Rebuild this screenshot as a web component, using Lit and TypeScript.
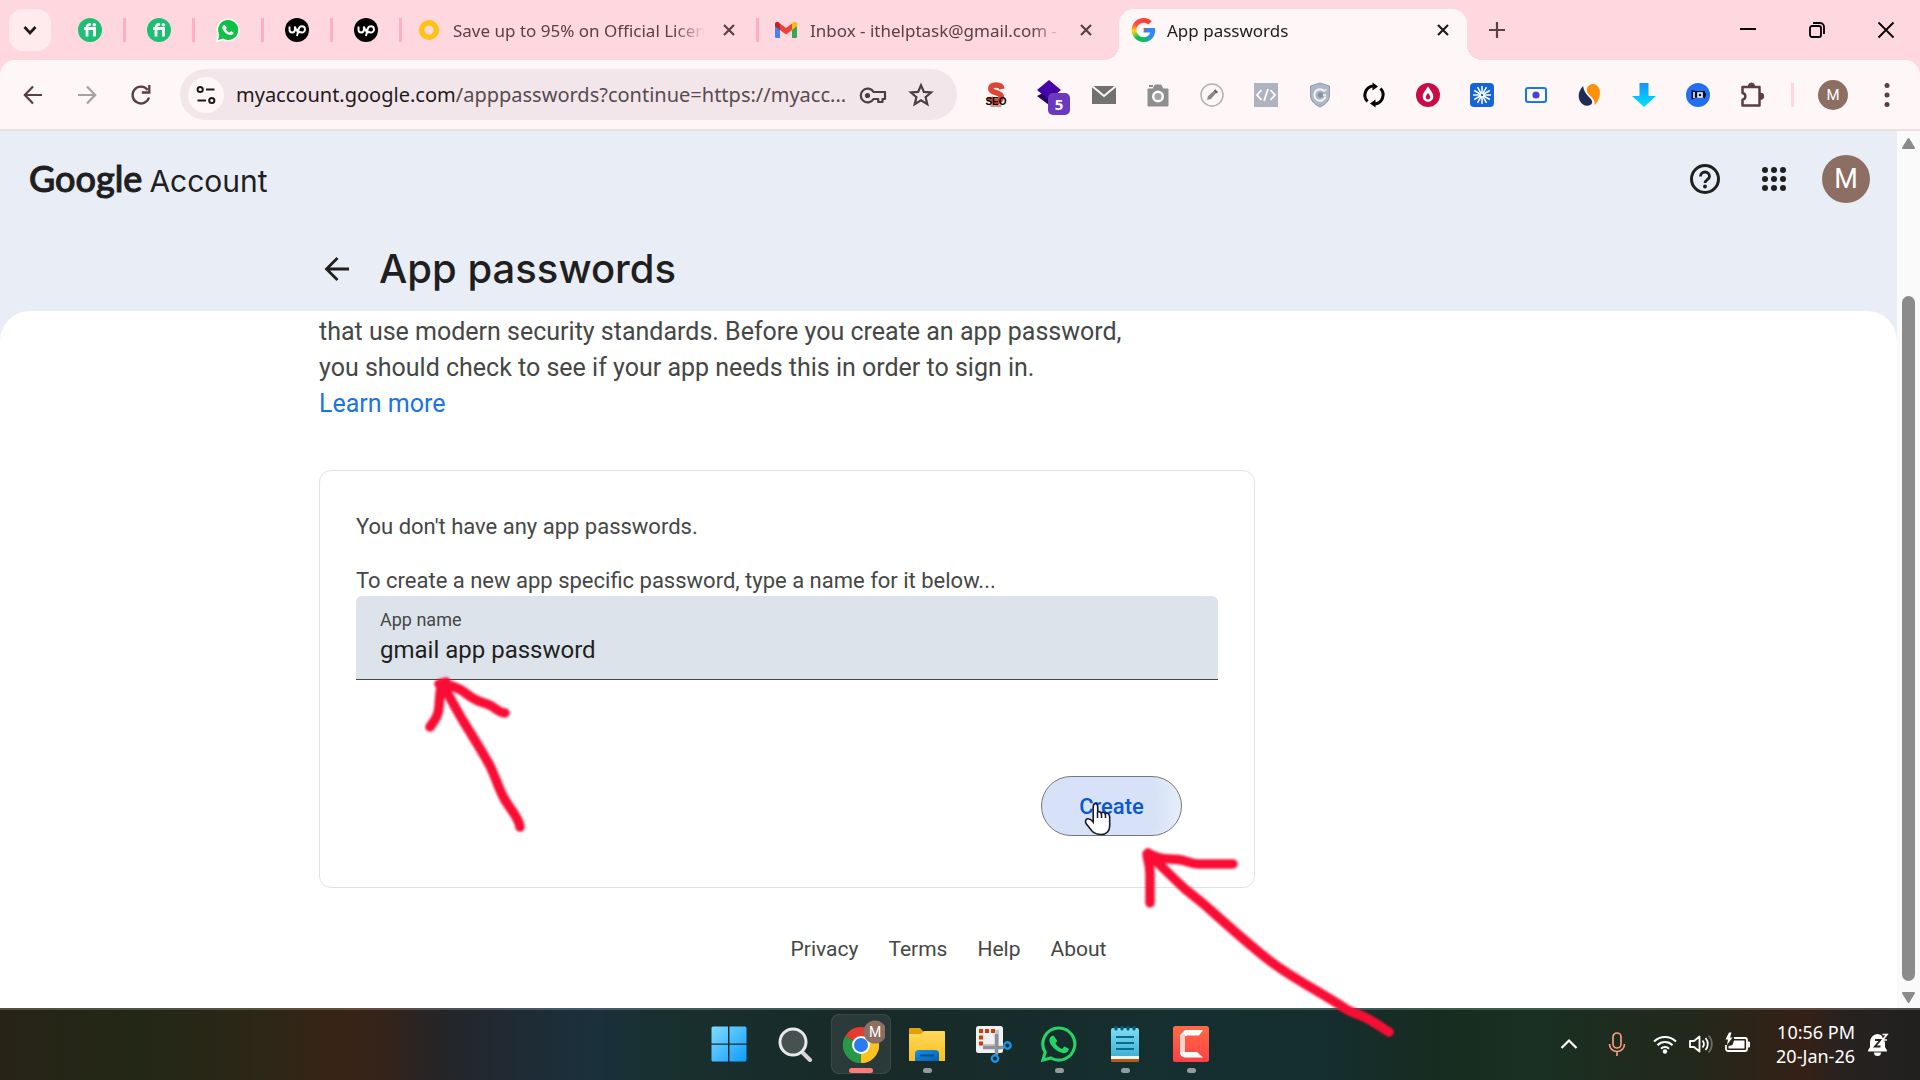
import { LitElement, html, css, svg, type TemplateResult } from "lit";
import { customElement } from "lit/decorators.js";

type Icon = TemplateResult;

const icon = (size: number, box: string, body: unknown): Icon =>
  html`<svg width=${size} height=${size} viewBox=${box} fill="none" aria-hidden="true">${body}</svg>`;

/* ---------- shared glyphs ---------- */

const whatsappPath =
  "M12 2A10 10 0 0 0 3.400 17L2 22l5.200-1.400A10 10 0 1 0 12 2z";
const handsetPath =
  "M8.500 6.800c-.3-.5-.5-.5-.8-.5h-.6c-.3 0-.7.1-1 .5-.4.400-1.200 1.200-1.200 2.800s1.200 3.200 1.400 3.400c.2.200 2.400 3.700 5.900 5 2.900 1.100 3.500.9 4.100.8.700-.1 2-.8 2.300-1.600.300-.8.300-1.500.200-1.600-.1-.2-.3-.2-.6-.4l-2.100-1c-.3-.1-.5-.2-.8.2l-.9 1.200c-.2.200-.4.200-.7.100-.3-.2-1.300-.5-2.500-1.600-.9-.8-1.500-1.800-1.700-2.100-.2-.3 0-.5.100-.6l.8-1c.1-.2.100-.4 0-.6z";

const chevronDown = icon(24, "0 0 24 24", svg`<path d="m6.500 9 5.500 6 5.500-6" stroke="#1f1a1b" stroke-width="2.800"/>`);
const closeIcon = icon(18, "0 0 18 18", svg`<path d="m4 4 10 10M14 4 4 14" stroke="currentColor" stroke-width="2.200"/>`);
const plusIcon = icon(20, "0 0 20 20", svg`<path d="M10 2v16M2 10h16" stroke="#5a4047" stroke-width="2.200"/>`);

const fiverrIcon = icon(24, "0 0 24 24", svg`
  <circle cx="12" cy="12" r="12" fill="#1dbf73"/>
  <path d="M6 10.500h10.500v8M9 18.500V9.500c0-2.300 1.300-3.300 3.800-3.200" stroke="#fff" stroke-width="2.800"/>
  <circle cx="16.300" cy="6.700" r="1.800" fill="#fff"/>`);

const whatsappTabIcon = icon(26, "0 0 26 26", svg`
  <path transform="translate(1 1)" d=${whatsappPath} fill="#fff" stroke="#fff" stroke-width="3"/>
  <path transform="translate(1 1)" d=${whatsappPath} fill="#0fc144"/>
  <path transform="translate(3.400 3) scale(.8)" d=${handsetPath} fill="#fff"/>`);

const upworkIcon = icon(24, "0 0 24 24", svg`
  <circle cx="12" cy="12" r="12" fill="#000"/>
  <path d="M4.500 8.500v3.300a2.700 2.700 0 0 0 5.400 0V8.500c1 3 2.600 5.800 4.600 6.200M12 18l1.500-6.500c.5-2.200 1.800-3.200 3.400-3.200a3 3 0 1 1 0 6.200c-1.800 0-3.600-1.300-5-3.500" stroke="#fff" stroke-width="1.900"/>`);

const ringIcon = icon(24, "0 0 24 24", svg`<circle cx="12" cy="12" r="7.300" stroke="#ffc20e" stroke-width="5.400"/>`);

const gmailIcon = icon(24, "0 0 24 24", svg`
  <path d="M1 6.500V18.500a1.500 1.500 0 0 0 1.500 1.500H6V10z" fill="#4285f4"/>
  <path d="M18 10v10h3.500a1.500 1.500 0 0 0 1.500-1.500V6.500z" fill="#34a853"/>
  <path d="M18 5.500V12l5-3.800V6c0-2-2.200-3-3.800-1.800z" fill="#fbbc04"/>
  <path d="M6 12V5.500l6 4.500 6-4.500V12l-6 4.500z" fill="#ea4335"/>
  <path d="M1 6v2.200L6 12V5.500L4.800 4.200C3.200 3 1 4 1 6z" fill="#c5221f"/>`);

/* ---------- toolbar glyphs ---------- */

const arrowLeft = icon(24, "0 0 24 24", svg`<path d="M21 12H4.500M12 3.500 3.800 12l8.200 8.500" stroke="#5b3d45" stroke-width="2.200"/>`);
const arrowRight = icon(24, "0 0 24 24", svg`<path d="M3 12h16.500M12 3.500l8.200 8.500-8.200 8.500" stroke="#a99fa1" stroke-width="2.200"/>`);
const reloadIcon = icon(24, "0 0 24 24", svg`
  <path d="M20 14.500A8.400 8.400 0 1 1 18.700 7" stroke="#5b3d45" stroke-width="2.300"/>
  <path d="M20.300 2v7.500h-7.500" stroke="#5b3d45" stroke-width="2.300"/>`);
const tuneIcon = icon(22, "0 0 22 22", svg`
  <circle cx="5.200" cy="5.500" r="2.600" stroke="#1f1a1b" stroke-width="2"/>
  <circle cx="16.800" cy="16.500" r="2.600" stroke="#1f1a1b" stroke-width="2"/>
  <path d="M11 5.500h8.500M2.500 16.500H11" stroke="#1f1a1b" stroke-width="2.200"/>`);
const keyIcon = icon(28, "0 0 28 28", svg`
  <path d="M14.600 11H26v7h-2.500v3h-4.300v-3h-4.600a6.900 6.900 0 1 1 0-7z" stroke="#4a3f42" stroke-width="2.200" stroke-linejoin="round"/>
  <circle cx="8.500" cy="14.500" r="2.600" fill="#4a3f42"/>`);
const starIcon = icon(26, "0 0 26 26", svg`<path d="m13 3.300 2.900 6.600 7.200.6-5.500 4.700 1.700 7-6.300-3.800-6.300 3.800 1.700-7-5.500-4.700 7.200-.6z" stroke="#4a3f42" stroke-width="2.200"/>`);

const extensions: { name: string; art: Icon }[] = [
  { name: "SEO", art: icon(30, "0 0 30 30", svg`
      <path d="M21 9C20.500 6 18.500 5 15.200 5c-3.600 0-5.400 1.400-5.400 3.700 0 5 10.600 3 10.600 8.300 0 2.700-2.200 4.500-5.400 4.500-3.400 0-5.300-1.200-5.900-4.500" stroke="#dc4534" stroke-width="5.500"/>
      <path d="M9.500 24.500h11v2.500h-11z" fill="#e0907f"/>
      <text x="15" y="25" text-anchor="middle" font-family="Liberation Sans, sans-serif" font-weight="700" font-size="10" fill="#000">SEO</text>`) },
  { name: "Layers", art: icon(40, "0 0 40 40", svg`
      <path d="m7 21 12-6 12 6-12 9z" fill="#24006b"/>
      <path d="m7 15 12-10 12 10-12 10z" fill="#4502a8"/>
      <rect x="18" y="18" width="22" height="22" rx="5" fill="#6b38c0"/>
      <text x="29" y="35" text-anchor="middle" font-family="Noto Sans, sans-serif" font-weight="700" font-size="15" fill="#fff">5</text>`) },
  { name: "Mail", art: icon(26, "0 0 26 26", svg`
      <path d="M1 4h24v18H1z" fill="#717171"/><path d="m1 4 12 10L25 4" stroke="#fff8f8" stroke-width="2"/>`) },
  { name: "Camera", art: icon(26, "0 0 26 26", svg`
      <path d="M3 7h5l2-4h6l2 4h5v17H3z" fill="#8e8e8e" stroke="#8e8e8e" stroke-linejoin="round"/>
      <circle cx="13" cy="14.500" r="4.800" fill="#a4a4a4" stroke="#fff" stroke-width="2.400"/>
      <path d="M4 4h4" stroke="#8e8e8e" stroke-width="2"/>`) },
  { name: "Pen", art: icon(26, "0 0 26 26", svg`
      <circle cx="13" cy="13" r="11" stroke="#b3b3b3" stroke-width="1.500"/>
      <path d="m8 18 1-4 7-6 2 2-6 7z" fill="#8a8a8a"/><path d="m15.500 8 2.800 2.800" stroke="#666" stroke-width="2"/>`) },
  { name: "Code", art: icon(26, "0 0 26 26", svg`
      <path d="M1 1h24v24H1z" fill="#aeb3bf"/>
      <path d="m8.500 8-4.500 5 4.500 5M17.500 8l4.500 5-4.500 5M15 7l-4 12" stroke="#fff" stroke-width="1.800"/>`) },
  { name: "Shield", art: icon(26, "0 0 26 26", svg`
      <path d="m13 1 9.500 3v9c0 6-4 9.500-9.500 12-5.500-2.500-9.500-6-9.500-12V4z" fill="#adb7c6" stroke="#909bad"/>
      <path d="M17.500 9.500a5.700 5.700 0 1 0 1 5" stroke="#f3f6fa" stroke-width="2"/>
      <circle cx="13.500" cy="13" r="2.800" fill="#8492aa"/><path d="M16 13h3M17.500 8h2" stroke="#f3f6fa" stroke-width="1.600"/>`) },
  { name: "Sync", art: icon(26, "0 0 26 26", svg`
      <path d="M12 4A9.200 9.200 0 0 0 6.500 19.500M14 22A9.200 9.200 0 0 0 19.500 6.500" stroke="#000" stroke-width="3"/>
      <path d="M11.500.5 17 4.500l-5.500 4zM14.500 25.500 9 21.500l5.500-4z" fill="#000"/>`) },
  { name: "Drop", art: icon(26, "0 0 26 26", svg`
      <circle cx="13" cy="13" r="12" fill="#c80d46"/>
      <path d="M13 4.500c3 4.300 5.300 7 5.300 10a5.300 5.300 0 0 1-10.600 0c0-3 2.300-5.700 5.300-10z" fill="#fff"/>
      <path d="M13 11c1.500 2 2.200 3 2.200 4.200a2.200 2.200 0 0 1-4.400 0c0-1.200.7-2.200 2.200-4.200z" fill="#c80d46"/>`) },
  { name: "Burst", art: icon(26, "0 0 26 26", svg`
      <rect x="1" y="1" width="24" height="24" rx="4" fill="#1565d8"/>
      ${[0, 30, 60, 90, 120, 150].map(
        (a) => svg`<path transform="rotate(${a} 13 13)" d="M13 4v18" stroke="#fff" stroke-width="1.500"/>`
      )}<circle cx="13" cy="13" r="2.500" fill="#fff"/><circle cx="13" cy="13" r="1.200" fill="#1565d8"/>`) },
  { name: "Recorder", art: icon(26, "0 0 26 26", svg`
      <rect x="3" y="6" width="20" height="14" rx="2" fill="#fff" stroke="#1477f8" stroke-width="2"/>
      <circle cx="13" cy="13" r="3.600" fill="#4a3fd6"/>`) },
  { name: "Similar", art: icon(26, "0 0 26 26", svg`
      <path d="M6 4C1 9-.5 18 6 22.500c3 2 8 1.500 9-1.500 1.500-5-7-6-9-17z" fill="#212c56"/>
      <path d="M12 3.500c4-3 9-1 10.500 4C24 14 21 20 17.500 23c1.500-7-6.500-9.500-7.500-13.500-.6-2.500 0-4.500 2-6z" fill="#fb9109"/>`) },
  { name: "Download", art: icon(26, "0 0 26 26", svg`
      <defs><linearGradient id="dl" x1="0" y1="0" x2="0" y2="1"><stop stop-color="#1590ff"/><stop offset="1" stop-color="#00e4fb"/></linearGradient></defs>
      <path d="M8.500 1h9v13H25L13 25 1 14h7.500z" fill="url(#dl)"/>`) },
  { name: "IQ", art: icon(26, "0 0 26 26", svg`
      <circle cx="13" cy="13" r="12" fill="#2170f3"/>
      <path d="M6.500 8v10l4-2.500h8l1.500 1.500v-2.500h1v-3.500h-1V9h-9z" fill="#06132e"/>
      <path d="M9 10v6M13 11h4v4h-4z" stroke="#fff" stroke-width="1.500"/>`) },
  { name: "Extensions", art: icon(28, "0 0 28 28", svg`
      <path d="M4.500 6h17v18.500h-17v-5.800c3.800-.5 3.800-6.200 0-6.700z" stroke="#5b3d45" stroke-width="2.500" stroke-linejoin="round"/>
      <path d="M10.500 5a3 3 0 0 1 6 0zM22.500 12a3 3 0 0 1 0 6.500z" fill="#5b3d45" stroke="#5b3d45"/>`) },
];

/* ---------- tab strip ---------- */

@customElement("tab-strip")
class TabStrip extends LitElement {
  static styles = css`
    :host { display: block; background: #ffd7df; font-family: "Noto Sans", "Open Sans", sans-serif; }
    .strip { display: flex; align-items: flex-end; height: 60px; padding-left: 9px; }
    button { border: 0; padding: 0; background: none; display: grid; place-items: center; color: inherit; }
    .search { width: 42px; height: 42px; margin: 0 6px 9px 0; border-radius: 14px; background: #ffebee; }
    .tab { display: flex; align-items: center; gap: 12px; height: 42px; margin-bottom: 9px; box-sizing: border-box; color: #5a4047; }
    .tab svg { flex: none; }
    .split::after { content: ""; flex: none; width: 3px; height: 24px; background: #ffafbf; }
    .pinned { width: 69px; gap: 0; }
    .pinned .fav { flex: 1; display: grid; place-items: center; }
    .wide { width: 360px; padding: 0 21px 0 15px; }
    .wide.split { width: 357px; padding-right: 0; }
    .wide.split .x { margin-right: 3px; }
    .title { flex: 1; min-width: 0; overflow: hidden; white-space: nowrap; padding-top: 2px; font-size: 17px; line-height: 26px;
      mask-image: linear-gradient(90deg, #000 88%, transparent); }
    .x { width: 24px; height: 24px; flex: none; }
    .active { position: relative; width: 348px; height: 51px; margin: 0; padding: 0 12px 9px; border-radius: 15px 15px 0 0;
      background: #fff7f7; color: #1f1a1b; }
    .active::before, .active::after { content: ""; position: absolute; bottom: 0; width: 15px; height: 15px; }
    .active::before { right: 100%; background: radial-gradient(circle at 0 0, transparent 15px, #fff7f7 15px); }
    .active::after { left: 100%; background: radial-gradient(circle at 100% 0, transparent 15px, #fff7f7 15px); }
    .g { flex: none; width: 24px; height: 24px; transform: scale(1.2);
      clip-path: path("M12.545,10.239v3.821h5.445c-0.712,2.315-2.647,3.972-5.445,3.972c-3.332,0-6.033-2.701-6.033-6.032s2.701-6.032,6.033-6.032c1.498,0,2.866,0.549,3.921,1.453l2.814-2.814C17.503,2.988,15.139,2,12.545,2C7.021,2,2.543,6.477,2.543,12s4.478,10,10.002,10c8.396,0,10.249-7.85,9.426-11.748L12.545,10.239z");
      background: conic-gradient(#f4402f 0deg 60deg, #3186ff 75deg 130deg, #0ebc5f 170deg 215deg, #ffd314 265deg, #ff4641 310deg); }
    .new { width: 24px; height: 24px; margin: 0 0 18px 18px; }
    .controls { display: flex; margin-left: auto; }
    .controls button { width: 69px; height: 60px; }
  `;
  render() {
    const pinned = [
      ["Fiverr", fiverrIcon], ["Fiverr", fiverrIcon], ["WhatsApp", whatsappTabIcon],
      ["Upwork", upworkIcon], ["Upwork", upworkIcon],
    ] as [string, Icon][];
    return html`<div class="strip">
      <button class="search" aria-label="Search tabs">${chevronDown}</button>
      ${pinned.map(([name, art]) => html`<div class="tab pinned split"><button class="fav" aria-label=${name}>${art}</button></div>`)}
      <div class="tab wide split">${ringIcon}<span class="title">Save up to 95% on Official Licen</span><button class="x" aria-label="Close tab">${closeIcon}</button></div>
      <div class="tab wide">${gmailIcon}<span class="title">Inbox - ithelptask@gmail.com -</span><button class="x" aria-label="Close tab">${closeIcon}</button></div>
      <div class="tab active"><span class="g"></span><span class="title">App passwords</span><button class="x" aria-label="Close tab">${closeIcon}</button></div>
      <button class="new" aria-label="New tab">${plusIcon}</button>
      <div class="controls">
        <button aria-label="Minimize">${icon(16, "0 0 16 16", svg`<path d="M0 7h16" stroke="#000" stroke-width="2"/>`)}</button>
        <button aria-label="Restore">${icon(18, "0 0 18 18", svg`<rect x="2" y="5" width="11" height="11" rx="2" stroke="#000" stroke-width="1.800"/><path d="M5 2h7a4 4 0 0 1 4 4v7" stroke="#000" stroke-width="1.800"/>`)}</button>
        <button aria-label="Close">${icon(18, "0 0 18 18", svg`<path d="m1.500 1.500 15 15M16.500 1.500l-15 15" stroke="#000" stroke-width="1.800"/>`)}</button>
      </div>
    </div>`;
  }
}

/* ---------- toolbar ---------- */

@customElement("tool-bar")
class ToolBar extends LitElement {
  static styles = css`
    :host { display: block; background: #ffd7df; font-family: "Noto Sans", "Open Sans", sans-serif; }
    .bar { display: flex; align-items: center; height: 69px; padding: 0 6px; border-bottom: 2px solid #ebdfdf;
      border-radius: 15px 15px 0 0; background: #fff7f7; }
    button { border: 0; padding: 0; background: none; display: grid; place-items: center; }
    .cell { flex: none; width: 54px; height: 54px; }
    .omni { flex: 1; min-width: 0; display: flex; align-items: center; height: 51px; margin: 0 12px; padding: 0 12px 0 8px;
      box-sizing: border-box; border-radius: 26px; background: #f3e6ea; }
    .site { flex: none; width: 36px; height: 36px; border-radius: 50%; background: #fff7f7; }
    .url { flex: 1; min-width: 0; margin-left: 12px; overflow: hidden; white-space: nowrap; font-size: 20px; line-height: 30px; color: #574b4f; }
    .host { color: #1f1a1b; }
    .mark { flex: none; width: 48px; height: 48px; }
    .mark.key { width: 44px; margin-right: 2px; }
    .sep { flex: none; width: 3px; height: 24px; margin: 0 12px; background: #ffd7df; }
    .avatar { display: grid; place-items: center; width: 30px; height: 30px; border-radius: 50%; background: #8d6e63; color: #fff;
      font: 15px/30px Roboto, sans-serif; }
  `;
  render() {
    return html`<div class="bar">
      <button class="cell" aria-label="Back">${arrowLeft}</button>
      <button class="cell" aria-label="Forward">${arrowRight}</button>
      <button class="cell" aria-label="Reload">${reloadIcon}</button>
      <div class="omni">
        <button class="site" aria-label="Site information">${tuneIcon}</button>
        <span class="url"><span class="host">myaccount.google.com</span>/apppasswords?continue=https://myacc...</span>
        <button class="mark key" aria-label="Passwords">${keyIcon}</button>
        <button class="mark" aria-label="Bookmark">${starIcon}</button>
      </div>
      ${extensions.map((e) => html`<button class="cell" aria-label=${e.name}>${e.art}</button>`)}
      <span class="sep"></span>
      <button class="cell" aria-label="Profile"><span class="avatar">M</span></button>
      <button class="cell" aria-label="Menu">${icon(26, "0 0 26 26", svg`<g fill="#5b3d45"><circle cx="13" cy="3.500" r="2.500"/><circle cx="13" cy="13" r="2.500"/><circle cx="13" cy="22.500" r="2.500"/></g>`)}</button>
    </div>`;
  }
}

/* ---------- account page ---------- */

@customElement("account-page")
class AccountPage extends LitElement {
  static styles = css`
    :host { display: grid; grid-template-columns: 1fr 23px; background: #fafafa; color: #444746;
      font-family: Roboto, "Liberation Sans", sans-serif; }
    button { border: 0; padding: 0; background: none; display: grid; place-items: center; font-family: inherit; }
    a { color: inherit; text-decoration: none; }
    .page { display: flex; flex-direction: column; background: #e9edf6; }
    .top { display: flex; align-items: center; height: 96px; padding: 0 27px 0 29px; box-sizing: border-box; color: #1f1f1f; }
    .brand { display: flex; align-items: baseline; gap: 7px; font: 30px/40px Inter, sans-serif; }
    .brand b { font-weight: 500; font-family: Lato, sans-serif; font-size: 36px; -webkit-text-stroke: 1px #1f1f1f; }
    .tools { display: flex; align-items: center; margin-left: auto; }
    .tool { width: 69px; height: 48px; }
    .avatar { width: 48px; height: 48px; margin-left: 14px; border-radius: 50%; background: #8d6e63; color: #fff; font-size: 27px; line-height: 48px; }
    .heading { display: flex; align-items: center; gap: 24px; height: 84px; padding-left: 319px; color: #1f1f1f; }
    .back { width: 36px; height: 36px; }
    h1 { margin: 0; font: 500 40px/52px Inter, sans-serif; }
    main { flex: 1; padding: 3px 24px 0 319px; border-radius: 30px 30px 0 0; background: #fff; }
    .intro { margin: 0 0 48px; max-width: 830px; font-size: 25px; line-height: 36px; }
    .intro a { display: inline-block; color: #1a73e8; }
    .card { display: flex; flex-direction: column; max-width: 936px; padding: 41px 36px 51px; box-sizing: border-box;
      border: 1px solid #e0e2e0; border-radius: 12px; }
    .card p { margin: 0 0 24px; font-size: 22px; line-height: 30px; }
    .card p.tight { margin: 0; }
    .field { display: flex; flex-direction: column; height: 84px; padding: 13px 24px 0; box-sizing: border-box;
      border-radius: 6px 6px 0 0; border-bottom: 1px solid #444746; background: #dde3ea; }
    .field label { font: 18px/22px Roboto, sans-serif; }
    .field input { border: 0; padding: 0; outline: 0; background: none; color: #1f1f1f; font: 24px/38px Roboto, sans-serif; height: 38px; }
    .create { align-self: flex-end; width: 141px; height: 60px; margin: 96px 36px 0 0; border: 1px solid #747775; border-radius: 30px;
      background: radial-gradient(circle at 40% 50%, #d7e2f8 60px, #e4ecf8 80px); color: #0b57d0; font-size: 22px; font-weight: 500; }
    footer { display: flex; justify-content: center; gap: 30px; padding: 48px 0 46px; background: #fff; font-size: 21px; line-height: 26px; }
    .scroll { display: flex; flex-direction: column; align-items: center; padding: 5px 0 3px; background: #fafafa; }
    .scroll button { width: 23px; height: 15px; }
    .track { flex: 1; width: 13px; padding: 145px 0 9px; }
    .thumb { height: 100%; border-radius: 7px; background: #8b8b8b; }
  `;
  render() {
    return html`<div class="page">
        <header class="top">
          <div class="brand"><b>Google</b><span>Account</span></div>
          <div class="tools">
            <button class="tool" aria-label="Help">${icon(30, "0 0 30 30", svg`<circle cx="15" cy="15" r="13.500" stroke="#1f1f1f" stroke-width="3"/><path d="M10.500 12.500a4.500 4.500 0 0 1 9 0c0 3-4.500 3.200-4.500 6.500" stroke="#1f1f1f" stroke-width="2.800"/><circle cx="15" cy="22.500" r="1.900" fill="#1f1f1f"/>`)}</button>
            <button class="tool" aria-label="Google apps">${icon(24, "0 0 24 24", svg`${[3, 12, 21].map((y) => [3, 12, 21].map((x) => svg`<circle cx=${x} cy=${y} r="3" fill="#1f1f1f"/>`))}`)}</button>
            <button class="avatar" aria-label="Account">M</button>
          </div>
        </header>
        <div class="heading">
          <button class="back" aria-label="Back">${icon(36, "0 0 36 36", svg`<path d="M30 18H9M18.500 7 7.500 18l11 11" stroke="#1f1f1f" stroke-width="2.800"/>`)}</button>
          <h1>App passwords</h1>
        </div>
        <main>
          <p class="intro">that use modern security standards. Before you create an app password, you should check to see if your app needs this in order to sign in. <a href="#learn">Learn more</a></p>
          <section class="card">
            <p>You don't have any app passwords.</p>
            <p class="tight">To create a new app specific password, type a name for it below...</p>
            <div class="field"><label for="name">App name</label><input id="name" type="text" value="gmail app password" /></div>
            <button class="create">Create</button>
          </section>
        </main>
        <footer><a href="#privacy">Privacy</a><a href="#terms">Terms</a><a href="#help">Help</a><a href="#about">About</a></footer>
      </div>
      <div class="scroll">
        <button aria-label="Scroll up">${icon(15, "0 0 15 15", svg`<path d="M7.500 3 13 12H2z" fill="#8b8b8b" stroke="#8b8b8b" stroke-width="2" stroke-linejoin="round"/>`)}</button>
        <div class="track"><div class="thumb"></div></div>
        <button aria-label="Scroll down">${icon(15, "0 0 15 15", svg`<path d="M7.500 12 13 3H2z" fill="#8b8b8b" stroke="#8b8b8b" stroke-width="2" stroke-linejoin="round"/>`)}</button>
      </div>`;
  }
}

/* ---------- taskbar ---------- */

const apps: { name: string; state?: string; art: Icon }[] = [
  { name: "Start", art: icon(36, "0 0 36 36", svg`
      <defs><linearGradient id="win" x1="0" y1="0" x2="1" y2="1"><stop stop-color="#7fdcff"/><stop offset="1" stop-color="#0f9bff"/></linearGradient></defs>
      <path d="M2 .5h15v17H.5V2A1.500 1.500 0 0 1 2 .5zM18.500.5H34A1.500 1.500 0 0 1 35.500 2v15.500h-17zM.5 18.800H17v16.700H2A1.500 1.500 0 0 1 .5 34zM18.500 18.800h17V34a1.500 1.500 0 0 1-1.500 1.500H18.500z" fill="url(#win)"/>`) },
  { name: "Search", art: icon(36, "0 0 36 36", svg`
      <path d="m25 26 8 8" stroke="#d6d6d8" stroke-width="4" stroke-linecap="round"/>
      <circle cx="16" cy="16" r="13" fill="#455250" stroke="#e9e9eb" stroke-width="3"/>`) },
  { name: "Chrome", state: "active", art: icon(48, "0 0 48 48", svg`
      <path d="M24 25 8.400 16A18 18 0 0 1 39.600 16z" fill="#e33b2e"/>
      <path d="M24 25 39.600 16A18 18 0 0 1 24 43z" fill="#fcc31e"/>
      <path d="M24 25v18A18 18 0 0 1 8.400 16z" fill="#279847"/>
      <path d="M24 16.500h15.900A18 18 0 0 1 24 43l7.500-13.500z" fill="#fcc31e"/>
      <path d="M8.400 16 16.500 29.500 24 34l-2 9a18 18 0 0 1-13.600-27z" fill="#279847"/>
      <circle cx="24" cy="25" r="9" fill="#fff"/><circle cx="24" cy="25" r="7" fill="#2b7bf0"/>
      <circle cx="38" cy="12" r="11.500" fill="#8d6e63"/>
      <text x="38" y="17" text-anchor="middle" font-family="Roboto, sans-serif" font-size="14" fill="#fff">M</text>`) },
  { name: "Files", state: "open", art: icon(36, "0 0 36 36", svg`
      <defs><linearGradient id="fo" x1="0" y1="0" x2="0" y2="1"><stop stop-color="#ffd95c"/><stop offset="1" stop-color="#fbbf1f"/></linearGradient><linearGradient id="fb" x1="0" y1="0" x2="1" y2="1"><stop stop-color="#1592e0"/><stop offset="1" stop-color="#0560b4"/></linearGradient></defs>
      <path d="M0 3a1 1 0 0 1 1-1h10l4 4v6H0z" fill="#dfa104"/>
      <path d="M0 8h12l3-3h20a1 1 0 0 1 1 1v29H0z" fill="url(#fo)"/>
      <path d="M6 35v-7a4 4 0 0 1 4-4h16a4 4 0 0 1 4 4v7z" fill="url(#fb)"/><path d="M11 29.500h14" stroke="#07508f" stroke-width="2"/>`) },
  { name: "Snipping Tool", art: icon(40, "0 0 40 40", svg`
      <rect x="3" y="2" width="27" height="27" rx="2.500" fill="#f0f1f2"/>
      <path d="M22 6h4v18H10v-4h12z" fill="#c3c7ca"/>
      <path d="M6 5h4v4H6zM12 5h4v4h-4zM18 5h4v4h-4zM6 11.500h4v4H6zM6 17.500h4v4H6z" fill="#d83b01"/>
      <path d="M10 23.500h21M23.500 10v21" stroke="#8b9196" stroke-width="3.500"/>
      <circle cx="34.500" cy="21.500" r="3.200" stroke="#1a94e4" stroke-width="2.400"/><circle cx="22" cy="34.500" r="3.200" stroke="#1a94e4" stroke-width="2.400"/>`) },
  { name: "WhatsApp", state: "open", art: icon(38, "1 1 22 22", svg`
      <path d="M12 2.700A9.300 9.300 0 0 0 4 16.800L2.700 21.300l4.600-1.200A9.300 9.300 0 1 0 12 2.700z" stroke="#25d366" stroke-width="1.800"/>
      <path transform="translate(2.500 2.200) scale(.8)" d=${handsetPath} fill="#25d366"/>`) },
  { name: "Notepad", state: "open", art: icon(36, "0 0 36 36", svg`
      <defs><linearGradient id="np" x1="0" y1="0" x2="0" y2="1"><stop stop-color="#7fdcf5"/><stop offset="1" stop-color="#3fb2d6"/></linearGradient></defs>
      <path d="M4 30h28v5a1 1 0 0 1-1 1H5a1 1 0 0 1-1-1z" fill="#b45a14"/><path d="M4 29h28v4H4z" fill="#f2f2f2"/>
      <path d="M4 4a2 2 0 0 1 2-2h24a2 2 0 0 1 2 2v26H4z" fill="url(#np)"/>
      <path d="M9 1v2M15 1v2M21 1v2M27 1v2" stroke="#0a5a78" stroke-width="3.200" stroke-linecap="round"/>
      <path d="M9 11h18M9 17h18M9 23h18" stroke="#0a6a8e" stroke-width="2"/>`) },
  { name: "Camtasia", state: "open", art: icon(36, "0 0 36 36", svg`
      <defs><linearGradient id="ct" x1="0" y1="0" x2="0" y2="1"><stop stop-color="#ff6a45"/><stop offset="1" stop-color="#ff4146"/></linearGradient></defs>
      <rect width="36" height="36" rx="2.500" fill="url(#ct)"/>
      <path d="M12 4h18l-4 5.500H14L7 12V9z" fill="#fff"/><path d="M7 9.500 12 8v18l-5 1z" fill="#ffd3cb"/>
      <path d="M7 26h17l6 5.500H12a5 5 0 0 1-5-5z" fill="#fff"/>`) },
];

@customElement("task-bar")
class TaskBar extends LitElement {
  static styles = css`
    :host { display: block; color: #fff; font-family: "Noto Sans", "Open Sans", sans-serif;
      background: linear-gradient(90deg, #272417 0%, #232716 7%, #2b2717 13%, #382316 18%, #34231a 20%, #252528 23%, #1f2b35 27%, #1a303b 31%, #18302e 35%, #182a28 45%, #152f30 62%, #152e2e 69%, #172c20 75%, #193022 80%, #22281b 88%, #352016 94%, #272220 96%, #20201f 100%); }
    .bar { display: grid; grid-template-columns: 1fr auto 1fr; align-items: center; height: 72px;
      box-shadow: inset 0 2px rgb(255 255 255 / .2); }
    button { border: 0; padding: 0; background: none; display: grid; place-items: center; color: inherit; font: inherit; }
    .apps { grid-column: 2; display: flex; gap: 6px; }
    .app { position: relative; width: 60px; height: 60px; border-radius: 8px; box-sizing: border-box; }
    .app.active { background: rgb(255 255 255 / .08); border: 1px solid rgb(255 255 255 / .08); }
    .app.open::after, .app.active::after { content: ""; position: absolute; bottom: 1px; left: 50%; width: 9px; height: 5px;
      margin-left: -4px; border-radius: 3px; background: #939c9c; }
    .app.active::after { bottom: 0; width: 24px; margin-left: -12px; background: #ff7b74; }
    .tray { display: flex; align-items: center; justify-content: flex-end; padding-right: 30px; }
    .tray .i { width: 36px; height: 48px; }
    .tray .gap { margin-right: 12px; }
    .clock { display: block; margin: 0 11px 0 12px; width: 88px; text-align: right; font-size: 18px; line-height: 24px; }
  `;
  render() {
    return html`<div class="bar">
      <div class="apps">${apps.map((a) => html`<button class="app ${a.state ?? ""}" aria-label=${a.name}>${a.art}</button>`)}</div>
      <div class="tray">
        <button class="i gap" aria-label="Show hidden icons">${icon(18, "0 0 18 18", svg`<path d="m1.500 13 7.500-7.500 7.500 7.500" stroke="#fff" stroke-width="2.200"/>`)}</button>
        <button class="i gap" aria-label="Microphone">${icon(26, "0 0 26 26", svg`<rect x="9" y="2" width="8" height="15" rx="4" stroke="#f59a80" stroke-width="1.700"/><path d="M5.500 13a7.500 7.500 0 0 0 15 0M13 20.500V25" stroke="#f59a80" stroke-width="1.700"/>`)}</button>
        <button class="i" aria-label="Wi-Fi">${icon(26, "0 0 26 26", svg`<g stroke="#fff" stroke-width="2"><path d="M2 10.500a15.500 15.500 0 0 1 22 0M5.500 14.200a10.500 10.500 0 0 1 15 0M9 17.800a5.600 5.600 0 0 1 8 0"/></g><circle cx="13" cy="20.500" r="2.200" fill="#fff"/>`)}</button>
        <button class="i" aria-label="Volume">${icon(26, "0 0 26 26", svg`<path d="M2 10h4l5.500-4.500v15L6 16H2z" stroke="#fff" stroke-width="1.800" stroke-linejoin="round"/><path d="M14.500 9.500a5.500 5.500 0 0 1 0 7M17.500 7a9 9 0 0 1 0 12" stroke="#fff" stroke-width="1.800"/><path d="M20.500 4.500a12.500 12.500 0 0 1 0 17" stroke="#6a6b62" stroke-width="1.800"/>`)}</button>
        <button class="i" aria-label="Battery">${icon(26, "0 0 26 26", svg`<path d="M10 7h11a2 2 0 0 1 2 2v9a2 2 0 0 1-2 2H4a2 2 0 0 1-2-2v-4" stroke="#fff" stroke-width="1.800"/><path d="M10 9.500h10.500v8H4.500V15l4-1z" fill="#fff"/><path d="M24 11h1.500v5H24z" fill="#fff" stroke="#fff"/><path d="M5 1.500 1.500 8.500H4L3 14l5.500-7.500H6l1.500-5z" fill="#fff"/>`)}</button>
        <button class="clock">10:56 PM<br />20-Jan-26</button>
        <button aria-label="Notifications">${icon(24, "0 0 24 24", svg`
          <path d="M11.500 2A8 8 0 0 1 19 10v5l2 3.500v1H2v-1L4 15v-5a8 8 0 0 1 7.500-8zM8 20.500h7a3.500 3.500 0 0 1-7 0z" fill="#fff"/>
          <path d="M14.500 0H23v9.500h-5z" fill="#2a211f"/>
          <path d="M9 8h5.500L9 14.500h5.500" stroke="#2a211f" stroke-width="1.900"/><path d="M16.500 2.500H21L16.500 8H21" stroke="#fff" stroke-width="1.600"/>`)}</button>
      </div>
    </div>`;
  }
}

/* ---------- desktop ---------- */

@customElement("app-root")
class AppRoot extends LitElement {
  static styles = css`
    :host { display: block; position: relative; min-height: 100vh; }
    .desktop { display: flex; flex-direction: column; min-height: 100vh; }
    account-page { flex: 1; }
    .ink { position: absolute; top: 0; left: 0; pointer-events: none; }
  `;
  render() {
    return html`<div class="desktop">
        <tab-strip></tab-strip>
        <tool-bar></tool-bar>
        <account-page></account-page>
        <task-bar></task-bar>
      </div>
      <svg class="ink" width="1920" height="1080" viewBox="0 0 1920 1080" fill="none" aria-hidden="true">
        <defs><filter id="soft" x="-10%" y="-10%" width="120%" height="120%"><feGaussianBlur stdDeviation="1.300"/></filter></defs>
        <g stroke="#f90f36" stroke-width="9.500" stroke-linecap="round" stroke-linejoin="round" filter="url(#soft)">
          <path d="M439 684l7-2M443 685c8 14 14 26 22 39s17 27 25 42c6 12 9 24 15 34s14 18 15 27M447 684c6 3 12 4 17 8s11 8 17 10 8 2 12 5 8 6 12 6M441 688c-2 8-1 18-3 25s-5 9-8 14"/>
          <path d="M1148 853c12 12 24 24 37 36 10 8 14 11 21 17 20 18 42 38 64 55s52 32 76 48c8 5 14 5 22 10 8 4 14 9 21 13M1148 853c7 4 14 6 21 6s10 0 16 2 8 3 13 3h35M1147 854c1 7 3 12 3 20v29"/>
        </g>
        <path d="M1095.500 803.500c-1.500 0-2.300 1.500-2.300 3.500v15c-1.500-2-3.500-3.500-5.500-3.200-2.500.5-2.700 2.700-1.500 5l6 7.500c2.500 2.500 5 3.200 9 3.200 5.500 0 8.500-4 8.500-8.500v-8c0-2.500-.8-4.500-2.500-4.800-1-.3-1.700 0-2 .5-.5-1.500-3-2-4.200-.7-.6-1.500-1.800-1.500-3.300-1.200V807c0-2-.7-3.500-2.200-3.500z" fill="#fff" stroke="#171a2e" stroke-width="1.600"/>
        <path d="M1097.500 812v6M1101.500 812.500v5.500M1105.500 813v5" stroke="#171a2e" stroke-width="1.500"/>
      </svg>`;
  }
}
